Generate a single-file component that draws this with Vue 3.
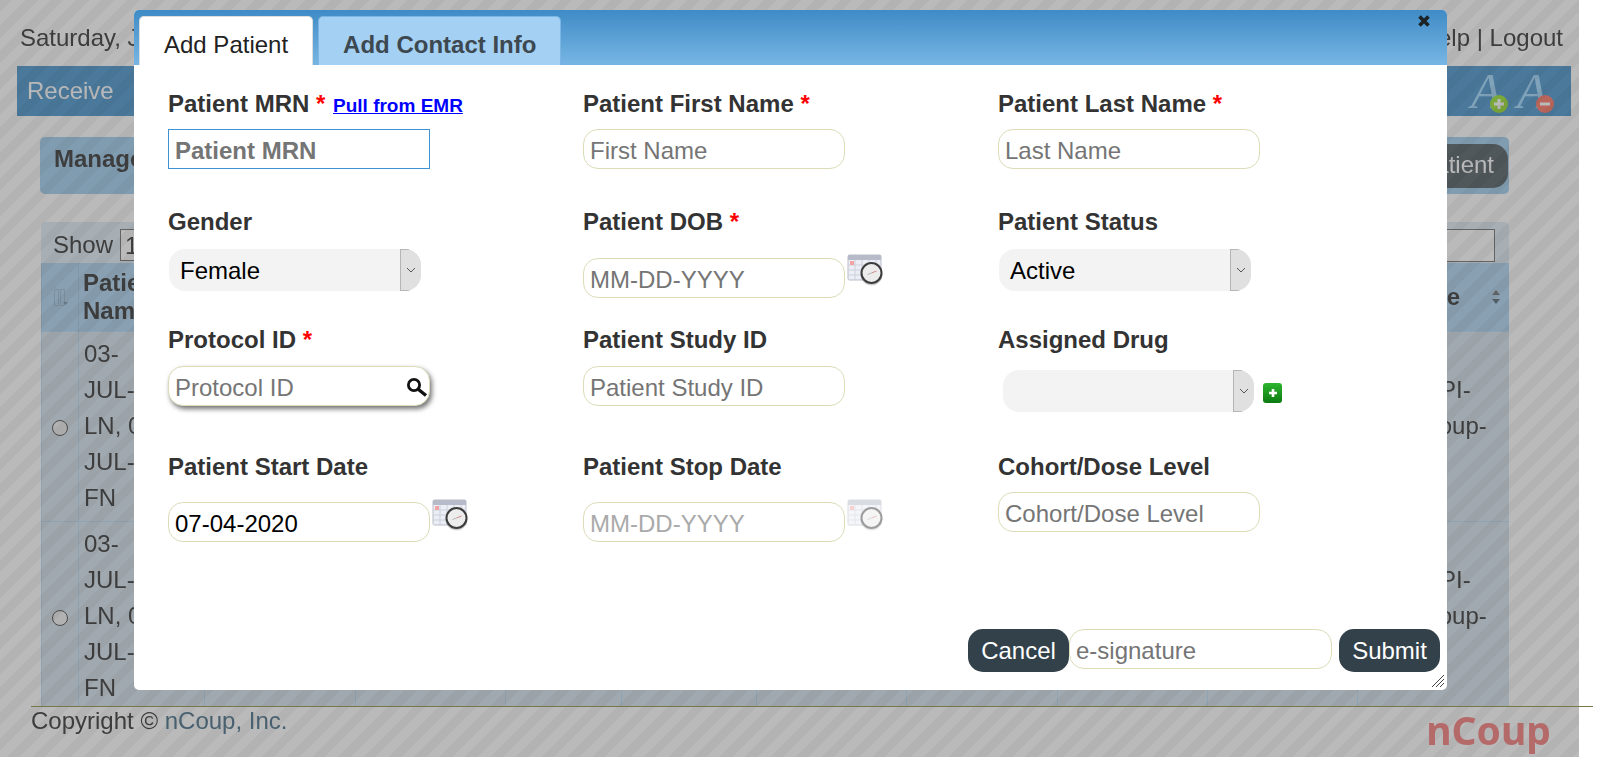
<template>
  <div class="page">
    <svg class="defs" width="0" height="0" aria-hidden="true">
      <symbol id="cal-icon" viewBox="0 0 36 32">
        <rect x="1" y="1" width="33" height="25" rx="1.5" fill="#eceef5" stroke="#b9bdc9" />
        <rect x="1" y="1" width="33" height="5" fill="#b7bbc9" />
        <path d="M1 11h33M1 16h33M1 21h33M8 6v20M15 6v20M22 6v20M29 6v20" stroke="#ccd0dc" />
        <rect x="3" y="7" width="4" height="4" fill="#f2a3a3" />
        <circle cx="24.5" cy="20.5" r="11" fill="#000" opacity="0.18" />
        <circle cx="24.5" cy="19" r="10" fill="#ececec" stroke="#3c3c3c" stroke-width="2" />
        <path d="M24.5 19l5-2" stroke="#d08a8a" />
        <path d="M24.5 19l-4 1.5" stroke="#b5b5b5" />
      </symbol>
      <symbol id="chevron" viewBox="0 0 10 6">
        <path d="M1 1l4 4 4-4" fill="none" stroke="#555" />
      </symbol>
    </svg>

    <div class="content">
      <header class="top">
        <span>Saturday, July 4, 2020</span>
        <span>Help | Logout</span>
      </header>

      <nav class="menu">
        <span>Receive</span>
        <span class="font-tools">
          <svg v-for="t in fontTools" :key="t.fill" width="46" height="50" viewBox="0 0 46 50" aria-hidden="true">
            <text x="1" y="42" class="big-a">A</text>
            <circle cx="29" cy="38" r="9" :fill="t.fill" />
            <path :d="t.mark" stroke="#fff" stroke-width="3" fill="none" />
          </svg>
        </span>
      </nav>

      <section class="manage">
        <strong>Manage Patients</strong>
        <span class="add-btn">Add Patient</span>
      </section>

      <section class="grid-wrap">
        <div class="grid-top">
          <span>Show</span>
          <span class="len-box">10</span>
          <span class="search-box"></span>
        </div>
        <table class="grid">
          <colgroup>
            <col v-for="(w, i) in colWidths" :key="i" :style="{ width: w + 'px' }" />
          </colgroup>
          <thead>
            <tr>
              <th class="c0">
                <svg width="15" height="20" viewBox="0 0 15 20" aria-hidden="true">
                  <path d="M1.5 1.5h4v16h-4zM7.5 1.5h4v16h-4z" fill="none" stroke="#a9c4da" />
                  <path d="M10 14l5 0-2.5 3z" fill="#8fa6b8" />
                </svg>
              </th>
              <th>Patient Name</th>
              <th v-for="n in 8" :key="n"></th>
              <th class="cl">
                Site
                <svg class="sort" width="10" height="16" viewBox="0 0 10 16" aria-hidden="true">
                  <path d="M5 1l4 5H1z" fill="#8a8a8a" />
                  <path d="M5 15l4-5H1z" fill="#6f7f8b" />
                </svg>
              </th>
            </tr>
          </thead>
          <tbody>
            <tr v-for="r in rows" :key="r">
              <td class="c0"><span class="radio"></span></td>
              <td>03-<br />JUL-<br />LN, 0<br />JUL-<br />FN</td>
              <td v-for="n in 8" :key="n"></td>
              <td class="cl">SAPI-<br />nCoup-<br />&nbsp;</td>
            </tr>
          </tbody>
        </table>
      </section>
    </div>

    <footer class="foot">
      <span>Copyright © <span class="brand-link">nCoup, Inc.</span></span>
      <span class="logo">nCoup</span>
    </footer>

    <div class="overlay"></div>

    <div class="dialog">
      <div class="tabs">
        <span class="tab active">Add Patient</span>
        <span class="tab">Add Contact Info</span>
        <svg class="close" width="14" height="14" viewBox="0 0 14 14" aria-hidden="true">
          <path d="M2.5 2.5l9 9M11.5 2.5l-9 9" stroke="#1c2226" stroke-width="3.6" />
        </svg>
      </div>

      <div class="form">
        <div class="field">
          <label>Patient MRN <i>*</i> <a href="#" class="emr">Pull from EMR</a></label>
          <input class="mrn" placeholder="Patient MRN" />
        </div>
        <div class="field">
          <label>Patient First Name <i>*</i></label>
          <input placeholder="First Name" />
        </div>
        <div class="field">
          <label>Patient Last Name <i>*</i></label>
          <input placeholder="Last Name" />
        </div>

        <div class="field">
          <label>Gender</label>
          <div class="sel"><span>Female</span><b><svg width="10" height="6"><use href="#chevron" /></svg></b></div>
        </div>
        <div class="field">
          <label>Patient DOB <i>*</i></label>
          <div class="with-cal dob">
            <input placeholder="MM-DD-YYYY" />
            <svg class="cal" width="36" height="32" aria-hidden="true"><use href="#cal-icon" /></svg>
          </div>
        </div>
        <div class="field">
          <label>Patient Status</label>
          <div class="sel"><span>Active</span><b><svg width="10" height="6"><use href="#chevron" /></svg></b></div>
        </div>

        <div class="field">
          <label>Protocol ID <i>*</i></label>
          <div class="protocol">
            <input placeholder="Protocol ID" />
            <svg class="lens" width="22" height="21" viewBox="0 0 22 21" aria-hidden="true">
              <circle cx="8" cy="9" r="5.6" fill="none" stroke="#111" stroke-width="2.8" />
              <path d="M12.5 13.5l7.5 6" stroke="#111" stroke-width="3.4" />
            </svg>
          </div>
        </div>
        <div class="field">
          <label>Patient Study ID</label>
          <input class="study" placeholder="Patient Study ID" />
        </div>
        <div class="field">
          <label>Assigned Drug</label>
          <div class="drug">
            <div class="sel"><span></span><b><svg width="10" height="6"><use href="#chevron" /></svg></b></div>
            <span class="plus"><svg width="10" height="10" viewBox="0 0 10 10"><path d="M5 1v8M1 5h8" stroke="#fff" stroke-width="2.6" /></svg></span>
          </div>
        </div>

        <div class="field">
          <label>Patient Start Date</label>
          <div class="with-cal start">
            <input value="07-04-2020" />
            <svg class="cal" width="36" height="32" aria-hidden="true"><use href="#cal-icon" /></svg>
          </div>
        </div>
        <div class="field">
          <label>Patient Stop Date</label>
          <div class="with-cal start off">
            <input placeholder="MM-DD-YYYY" disabled />
            <svg class="cal" width="36" height="32" aria-hidden="true"><use href="#cal-icon" /></svg>
          </div>
        </div>
        <div class="field">
          <label>Cohort/Dose Level</label>
          <input placeholder="Cohort/Dose Level" />
        </div>
      </div>

      <div class="actions">
        <button class="btn">Cancel</button>
        <input class="sig" placeholder="e-signature" />
        <button class="btn submit">Submit</button>
      </div>

      <svg class="grip" width="14" height="14" viewBox="0 0 14 14" aria-hidden="true">
        <path d="M13 1L1 13M13 5L5 13M13 9l-4 4" stroke="#444" fill="none" />
      </svg>
    </div>
  </div>
</template>

<script setup>
const rows = [1, 2]

const colWidths = [37, 126, 151, 150, 116, 135, 150, 151, 150, 150, 152]

const fontTools = [
  { fill: '#a9e650', mark: 'M29 33v10M24 38h10' },
  { fill: '#ff8b7d', mark: 'M24 38h10' }
]
</script>

<style>
html, body { margin: 0; background: #fff; overflow: hidden; }
</style>

<style scoped>
.page {
  position: relative;
  isolation: isolate;
  width: 1600px;
  height: 757px;
  overflow: hidden;
  font-family: "Liberation Sans", Arial, sans-serif;
  font-size: 24px;
  color: #555;
  background: #fff;
}
.defs { position: absolute; }

.content {
  width: 1579px;
  height: 706px;
  overflow: hidden;
}

.top {
  display: flex;
  justify-content: space-between;
  height: 66px;
  padding: 24px 16px 0 20px;
  box-sizing: border-box;
  line-height: 28px;
}

.menu {
  display: flex;
  justify-content: space-between;
  align-items: center;
  width: 1554px;
  height: 50px;
  margin-left: 17px;
  padding: 0 9px 0 10px;
  box-sizing: border-box;
  background: #66a6d6;
  color: #fff;
}
.font-tools { display: flex; height: 50px; }
.font-tools svg { overflow: visible; }
.big-a {
  font-family: "Liberation Serif", serif;
  font-style: italic;
  font-size: 50px;
  fill: #b0e0ff;
}

.manage {
  display: flex;
  justify-content: space-between;
  width: 1469px;
  height: 57px;
  margin: 21px 0 0 40px;
  padding: 7px 1px 0 14px;
  box-sizing: border-box;
  border-radius: 5px;
  background: #b0d6f2;
  line-height: 30px;
}
.add-btn {
  height: 44px;
  padding: 3px 14px 0;
  box-sizing: border-box;
  border-radius: 15px;
  background: #6e787d;
  color: #fff;
  line-height: 36px;
}

.grid-wrap {
  width: 1468px;
  margin: 28px 0 0 41px;
  border-radius: 5px 5px 0 0;
  overflow: hidden;
  background: #e5f0f8;
}
.grid-top {
  display: flex;
  align-items: center;
  gap: 7px;
  height: 41px;
  padding: 7px 14px 2px 12px;
  box-sizing: border-box;
}
.len-box {
  width: 80px;
  height: 32px;
  padding-left: 4px;
  box-sizing: border-box;
  border: 1px solid #888;
  line-height: 31px;
  background: #fff;
}
.search-box {
  margin-left: auto;
  width: 100px;
  height: 33px;
  box-sizing: border-box;
  border: 1px solid #888;
  background: #fff;
}
.grid {
  width: 1468px;
  table-layout: fixed;
  border-collapse: collapse;
}
.grid th {
  position: relative;
  height: 68px;
  padding: 0 4px;
  box-sizing: border-box;
  background: #bcdcf4;
  text-align: left;
  line-height: 28px;
  border-left: 1px solid #b0d0e8;
}
.grid td {
  height: 190px;
  padding: 0 5px;
  box-sizing: border-box;
  line-height: 36px;
  vertical-align: middle;
  border: 1px solid #c3dff5;
  background: #dde8f1;
}
.grid .c0 { padding: 0; text-align: center; }
.grid .c0 svg { display: block; margin: 2px auto 0 auto; }
.grid th.cl { padding-left: 58px; }
.grid td.cl { padding-left: 50px; }
.sort {
  position: absolute;
  right: 9px;
  top: 26px;
}
.radio {
  display: inline-block;
  width: 16px;
  height: 16px;
  box-sizing: border-box;
  border: 1px solid #666;
  border-radius: 50%;
  background: #f4f4f4;
  vertical-align: middle;
}

.foot {
  position: relative;
  z-index: 2;
  display: flex;
  justify-content: space-between;
  width: 1562px;
  height: 51px;
  margin-left: 31px;
  padding-right: 42px;
  box-sizing: border-box;
  border-top: 1px solid #77774c;
  color: #3d3d3d;
  line-height: 28px;
}
.brand-link { color: #48606f; }
.logo {
  margin-top: 1px;
  font-family: "Noto Sans", sans-serif;
  font-size: 39px;
  font-weight: 700;
  line-height: 44px;
  color: #b56a6a;
}

.overlay {
  position: absolute;
  z-index: 1;
  left: 0;
  top: 0;
  width: 1579px;
  height: 757px;
  background: repeating-linear-gradient(135deg, #b3b3b3 0 9px, #bababa 9px 18px);
  mix-blend-mode: multiply;
}

.dialog {
  position: absolute;
  z-index: 3;
  left: 134px;
  top: 10px;
  width: 1313px;
  height: 680px;
  border-radius: 5px;
  background: #fff;
  color: #333;
}

.tabs {
  position: relative;
  display: flex;
  align-items: flex-end;
  gap: 5px;
  height: 55px;
  padding-left: 5px;
  border-radius: 5px 5px 0 0;
  background: linear-gradient(#3f8bc6, #77b6e4);
}
.tab {
  height: 49px;
  padding: 0 24px;
  box-sizing: border-box;
  border: 1px solid #7ab5e3;
  border-bottom: 0;
  border-radius: 5px 5px 0 0;
  background: #a3d0f3;
  font-weight: 700;
  line-height: 56px;
  color: #3d4850;
}
.tab.active {
  border-color: #ddd;
  background: #fff;
  font-weight: 400;
  color: #222;
}
.close {
  position: absolute;
  right: 16px;
  top: 4px;
}

.form {
  display: grid;
  grid-template-columns: repeat(3, 415px);
  grid-template-rows: 118px 118px 127px auto;
  padding: 25px 0 0 34px;
}
.field {
  display: flex;
  flex-direction: column;
  align-items: flex-start;
}
.field label {
  height: 28px;
  font-weight: 700;
  line-height: 28px;
}
.field i { color: #f00; font-style: normal; }
.emr { font-size: 19px; color: #00f; margin-left: 1px; }

.field input, .sig {
  width: 262px;
  height: 40px;
  padding: 4px 6px 0;
  box-sizing: border-box;
  border: 1px solid #dcdcb8;
  border-radius: 15px;
  outline: none;
  background: #fff;
  font-family: "Liberation Sans", Arial, sans-serif;
  font-size: 24px;
  color: #000;
}
.field input::placeholder, .sig::placeholder { color: #757575; opacity: 1; }
.field > input { margin-top: 11px; }
.field > input.study { margin-top: 12px; }
.field input.mrn {
  border: 1px solid #3f93d2;
  border-radius: 0;
  font-weight: 700;
}
.field input:disabled::placeholder { color: #aaa; }

.sel {
  display: flex;
  justify-content: space-between;
  width: 252px;
  height: 42px;
  margin: 13px 0 0 1px;
  border-radius: 16px;
  overflow: hidden;
  background: #f3f3f3;
  line-height: 44px;
  color: #000;
}
.sel span { padding-left: 11px; }
.sel b {
  display: flex;
  align-items: center;
  justify-content: center;
  width: 21px;
  box-sizing: border-box;
  border: 1px solid #b5b5b5;
  border-right: 0;
  background: #e0e0e0;
}

.with-cal { display: flex; align-items: flex-start; gap: 2px; }
.with-cal.dob { margin-top: 18px; }
.with-cal.dob input { margin-top: 4px; }
.with-cal.start { margin-top: 18px; }
.with-cal.start input { margin-top: 3px; }
.off .cal { opacity: 0.5; }

.protocol { position: relative; margin-top: 12px; }
.protocol input { box-shadow: 2px 3px 5px rgba(0, 0, 0, 0.55); }
.lens {
  position: absolute;
  left: 238px;
  top: 10px;
}

.drug {
  display: flex;
  align-items: flex-start;
  gap: 9px;
  margin: 16px 0 0 5px;
}
.drug .sel { width: 251px; margin: 0; }
.plus {
  display: flex;
  align-items: center;
  justify-content: center;
  width: 19px;
  height: 20px;
  margin-top: 13px;
  border-radius: 3px;
  background: linear-gradient(#2eb52e, #0b7a12);
}

.actions {
  position: absolute;
  right: 7px;
  top: 619px;
  display: flex;
  align-items: flex-start;
}
.btn {
  height: 43px;
  min-width: 101px;
  padding: 0 13px;
  border: 0;
  border-radius: 15px;
  background: #33414a;
  color: #fff;
  font-family: "Liberation Sans", Arial, sans-serif;
  font-size: 24px;
}
.submit { margin-left: 7px; }
.sig { width: 263px; }
.grip {
  position: absolute;
  right: 2px;
  bottom: 2px;
}
</style>
